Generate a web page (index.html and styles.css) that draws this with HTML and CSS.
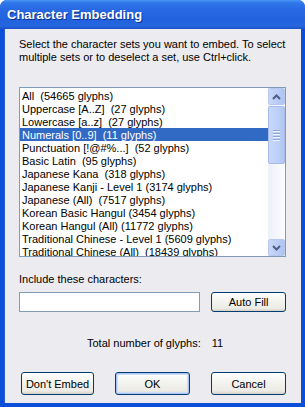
FILE: index.html
```html
<!DOCTYPE html>
<html>
<head>
<meta charset="utf-8">
<link rel="stylesheet" href="styles.css">
</head>
<body>
<div class="window">
  <div class="titlebar"><span class="title">Character Embedding</span></div>
  <div class="client">
    <p class="intro">Select the character sets you want to embed. To select multiple sets or to deselect a set, use Ctrl+click.</p>
    <div class="listbox">
      <ul class="items">
        <li>All&nbsp; (54665 glyphs)</li>
        <li>Uppercase [A..Z]&nbsp; (27 glyphs)</li>
        <li>Lowercase [a..z]&nbsp; (27 glyphs)</li>
        <li class="sel">Numerals [0..9]&nbsp; (11 glyphs)</li>
        <li>Punctuation [!@#%...]&nbsp; (52 glyphs)</li>
        <li>Basic Latin&nbsp; (95 glyphs)</li>
        <li>Japanese Kana&nbsp; (318 glyphs)</li>
        <li>Japanese Kanji - Level 1 (3174 glyphs)</li>
        <li>Japanese (All)&nbsp; (7517 glyphs)</li>
        <li>Korean Basic Hangul (3454 glyphs)</li>
        <li>Korean Hangul (All) (11772 glyphs)</li>
        <li>Traditional Chinese - Level 1 (5609 glyphs)</li>
        <li>Traditional Chinese (All)&nbsp; (18439 glyphs)</li>
      </ul>
      <div class="scrollbar">
        <div class="sbtn"><svg width="9" height="6" viewBox="0 0 9 6"><path d="M1 5 L4.5 1.5 L8 5" fill="none" stroke="#4D6185" stroke-width="2"/></svg></div>
        <div class="track">
          <div class="thumb"><span class="grip"></span><span class="grip"></span><span class="grip"></span><span class="grip"></span></div>
        </div>
        <div class="sbtn"><svg width="9" height="6" viewBox="0 0 9 6"><path d="M1 1 L4.5 4.5 L8 1" fill="none" stroke="#4D6185" stroke-width="2"/></svg></div>
      </div>
    </div>
    <div class="label">Include these characters:</div>
    <div class="inputrow">
      <div class="textbox"></div>
      <div class="btn small">Auto Fill</div>
    </div>
    <div class="total"><span>Total number of glyphs:</span><span class="count">11</span></div>
    <div class="buttons">
      <div class="btn">Don't Embed</div>
      <div class="btn default">OK</div>
      <div class="btn">Cancel</div>
    </div>
  </div>
</div>
</body>
</html>
```
FILE: styles.css
```css
html, body {
  margin: 0;
  padding: 0;
  background: #ffffff;
}
body {
  width: 305px;
  height: 407px;
  font-family: "Liberation Sans", Arial, sans-serif;
  font-size: 11px;
  color: #000;
}
.window {
  width: 305px;
  height: 407px;
  box-sizing: border-box;
  display: flex;
  flex-direction: column;
  background: #0B4FD8;
  border-radius: 7px 7px 0 0;
  overflow: hidden;
}
.titlebar {
  height: 29px;
  flex: none;
  display: flex;
  align-items: center;
  padding-left: 7px;
  background: linear-gradient(#4A94F5 0px, #2E76EA 3px, #2868E2 10px, #2262DE 20px, #2666DD 26px, #1C50C8 29px);
}
.title {
  color: #fff;
  font-weight: bold;
  font-size: 13px;
  text-shadow: 1px 1px 0 #0F2F8A;
  margin-top: -1px;
}
.client {
  flex: 1;
  margin: 0 4px 4px 4px;
  background: #ECEBF0;
  padding: 9px 15px 0 14px;
  display: flex;
  flex-direction: column;
  border-left: 1px solid #2A5BD0;
}
.intro {
  margin: 0;
  line-height: 13px;
}
.listbox {
  margin-top: 23px;
  height: 170px;
  box-sizing: border-box;
  border: 1px solid #7F9DB9;
  background: #fff;
  display: flex;
}
.items {
  list-style: none;
  margin: 0;
  padding: 1px 0 0 0;
  flex: 1;
  overflow: hidden;
}
.items li {
  height: 13px;
  line-height: 14px;
  padding-left: 2px;
  white-space: nowrap;
}
.items li.sel {
  background: #316AC5;
  color: #fff;
}
.scrollbar {
  width: 17px;
  flex: none;
  display: flex;
  flex-direction: column;
  background: linear-gradient(90deg, #EEF0F8, #FCFCFE);
}
.sbtn {
  height: 17px;
  box-sizing: border-box;
  border: 1px solid #B6C8EE;
  border-radius: 2px;
  background: linear-gradient(90deg, #C8D7F7, #BACCF5 60%, #B0C3F0);
  display: flex;
  align-items: center;
  justify-content: center;
}
.track {
  flex: 1;
  padding-top: 1px;
}
.thumb {
  height: 58px;
  box-sizing: border-box;
  border: 1px solid #A7BCEA;
  border-radius: 2px;
  background: linear-gradient(90deg, #C9D8FA, #BCCFF7 60%, #B3C6F2);
  display: flex;
  flex-direction: column;
  align-items: center;
  justify-content: center;
  gap: 1px;
}
.grip {
  width: 7px;
  height: 1px;
  background: #8CA7DE;
  border-bottom: 1px solid #EEF3FD;
}
.label {
  margin-top: 16px;
  line-height: 13px;
}
.inputrow {
  margin-top: 6px;
  display: flex;
  align-items: center;
  gap: 11px;
}
.textbox {
  width: 182px;
  height: 20px;
  box-sizing: border-box;
  border: 1px solid #7F9DB9;
  background: #fff;
}
.btn {
  box-sizing: border-box;
  border: 1px solid #003C74;
  border-radius: 3px;
  background: linear-gradient(#FFFFFF, #F4F4F0 40%, #ECEBE6 85%, #D6D0C5);
  display: flex;
  align-items: center;
  justify-content: center;
  height: 23px;
  width: 75px;
}
.btn.small {
  height: 20px;
}
.btn.default {
  box-shadow: inset 0 0 0 1px #A9C6F5, inset 0 0 0 2px #CEDDF7;
}
.total {
  margin-top: 25px;
  line-height: 13px;
  padding-left: 68px;
  display: flex;
}
.count {
  margin-left: 11px;
}
.buttons {
  margin-top: 22px;
  display: flex;
  justify-content: space-between;
  padding-left: 2px;
}
.buttons .btn:first-child {
  width: 73px;
}
```
